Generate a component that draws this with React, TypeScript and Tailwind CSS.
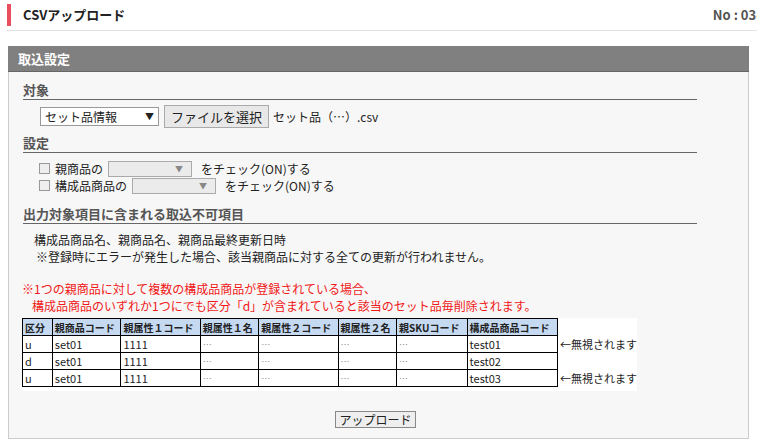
import React from 'react';

const font = { fontFamily: '"Noto Sans CJK JP", "Liberation Sans", sans-serif' };

const cols = [
  { label: '区分', w: 30 },
  { label: '親商品コード', w: 69 },
  { label: '親属性１コード', w: 80 },
  { label: '親属性１名', w: 59 },
  { label: '親属性２コード', w: 80 },
  { label: '親属性２名', w: 59 },
  { label: '親SKUコード', w: 71 },
  { label: '構成品商品コード', w: 91 },
];

const rows = [
  { v: ['u', 'set01', '1111', '…', '…', '…', '…', 'test01'], note: true },
  { v: ['d', 'set01', '1111', '…', '…', '…', '…', 'test02'], note: false },
  { v: ['u', 'set01', '1111', '…', '…', '…', '…', 'test03'], note: true },
];

const Section: React.FC<{ title: string }> = ({ title }) => (
  <div className="mr-[51px] border-b border-[#666] text-[13px] font-bold text-[#555] leading-[17px] pb-[1px]">{title}</div>
);

const FakeSelect: React.FC<{ w: number }> = ({ w }) => (
  <span className="inline-flex items-center justify-end h-[16px] border border-[#aaa] bg-[#ebebeb] pr-[8px] text-[8px] text-[#888]" style={{ width: w }}>▼</span>
);

export default function App() {
  return (
    <div className="w-[757px] h-[444px] bg-white overflow-hidden text-[#222]" style={font}>
      {/* header */}
      <div className="flex items-center justify-between pl-[7px] pt-[3px] h-[27px]">
        <div className="flex items-center h-[22px]">
          <div className="w-[4px] h-[22px] bg-[#ea4f5f]" />
          <span className="ml-[12px] text-[13px] font-bold text-[#222]">CSVアップロード</span>
        </div>
        <span className="text-[13px] font-bold text-[#555] whitespace-nowrap -mr-[4px]">No : 03-</span>
      </div>
      <div className="ml-[7px] mt-[3px] border-b border-[#e2e2e2]" />

      {/* panel */}
      <div className="ml-[8px] w-[741px] mt-[15px] h-[393px] border border-[#ccc] bg-[#f7f7f7]">
        <div className="h-[26px] bg-[#808080] border-b border-[#666] text-white text-[13px] font-bold flex items-center pl-[10px] -mx-[1px] -mt-[1px]">取込設定</div>
        <div className="pl-[14px] pt-[9px]">
          <Section title="対象" />
          <div className="flex items-center pl-[17px] mt-[5px] text-[12px]">
            <span className="inline-flex items-center justify-between w-[119px] h-[19px] border border-[#999] bg-white px-[4px] text-[12px]">
              セット品情報<span className="text-[9px]">▼</span>
            </span>
            <span className="ml-[5px] inline-flex items-center px-[6px] h-[23px] border border-[#aaa] bg-[#e8e8e8] text-[13px]">ファイルを選択</span>
            <span className="ml-[4px]">セット品（…）.csv</span>
          </div>
          <div className="mt-[6px]"><Section title="設定" /></div>
          <div className="pl-[16px] mt-[7px] text-[12px] leading-[17px]">
            <div className="flex items-center gap-[5px]">
              <span className="w-[11px] h-[11px] border border-[#999] bg-[#eee]" />
              <span>親商品の</span><FakeSelect w={84} /><span className="ml-[4px]">をチェック(ON)する</span>
            </div>
            <div className="flex items-center gap-[5px]">
              <span className="w-[11px] h-[11px] border border-[#999] bg-[#eee]" />
              <span>構成品商品の</span><FakeSelect w={84} /><span className="ml-[4px]">をチェック(ON)する</span>
            </div>
          </div>
          <div className="mt-[11px]"><Section title="出力対象項目に含まれる取込不可項目" /></div>
          <div className="pl-[11px] mt-[7px] text-[12px] leading-[17px]">
            <div>構成品商品名、親商品名、親商品最終更新日時</div>
            <div className="pl-[2px]">※登録時にエラーが発生した場合、該当親商品に対する全ての更新が行われません。</div>
          </div>
          <div className="mt-[15px] -ml-[1px] text-[12px] leading-[17px] text-[#f01818]">
            <div>※1つの親商品に対して複数の構成品商品が登録されている場合、</div>
            <div className="pl-[10px]">構成品商品のいずれか1つにでも区分「d」が含まれていると該当のセット品毎削除されます。</div>
          </div>
          <div className="mt-[4px] -ml-[1px] w-[615px] bg-white pb-[4px] flex text-[11px]">
            <table className="border-collapse">
              <thead>
                <tr className="h-[17px] bg-[#c5d9f1]">
                  {cols.map(c => (
                    <th key={c.label} className="border border-black text-left font-bold text-[10px] px-[2px] leading-[15px]" style={{ width: c.w }}>{c.label}</th>
                  ))}
                </tr>
              </thead>
              <tbody>
                {rows.map((r, i) => (
                  <tr key={i} className="h-[17px]">
                    {r.v.map((v, j) => (
                      <td key={j} className={`border border-black px-[2px] leading-[15px] ${v === '…' ? 'text-[#888] text-[9px]' : ''}`}>{v}</td>
                    ))}
                  </tr>
                ))}
              </tbody>
            </table>
            <div className="text-[11px] pt-[18px] pl-[2px] leading-[17px] whitespace-nowrap">
              {rows.map((r, i) => <div key={i} className="h-[17px]">{r.note ? '←無視されます' : ''}</div>)}
            </div>
          </div>
          <div className="flex justify-center mt-[20px] pr-[20px]">
            <span className="inline-flex items-center h-[17px] px-[3px] border border-[#888] bg-[#eee] text-[12px]">アップロード</span>
          </div>
        </div>
      </div>
    </div>
  );
}
